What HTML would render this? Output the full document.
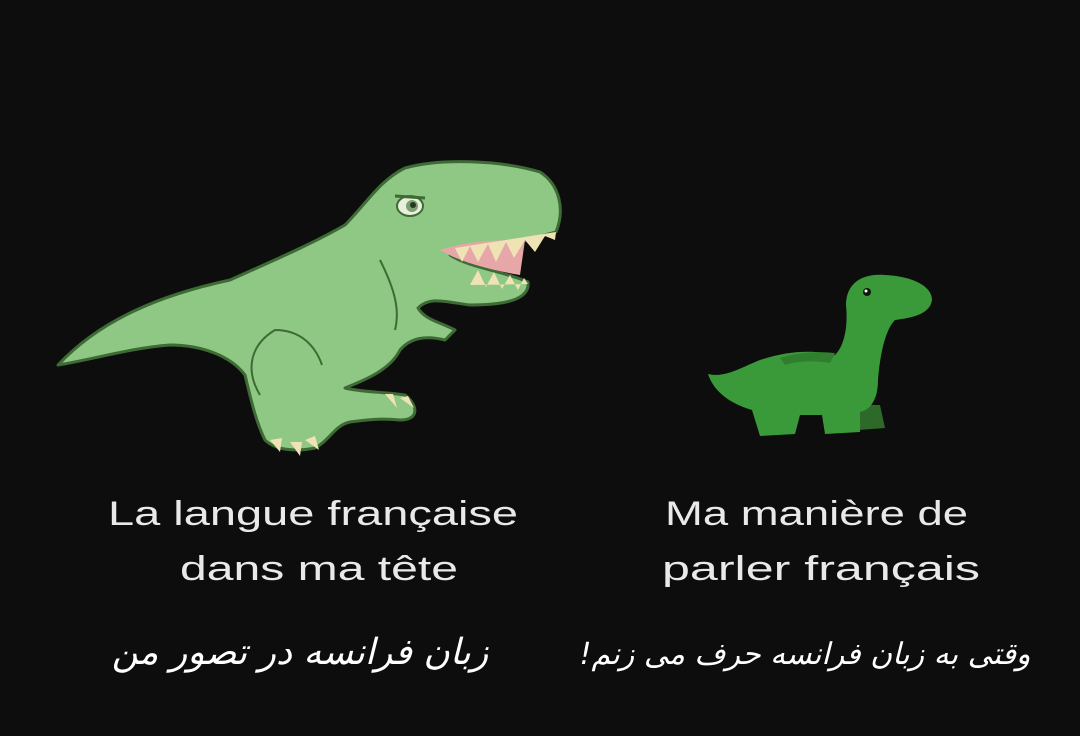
<!DOCTYPE html>
<html><head><meta charset="utf-8"><style>
html,body{margin:0;padding:0;background:#0d0d0d;}
svg{display:block}
.fa{position:absolute;color:#fff;font-family:"DejaVu Sans",sans-serif;font-style:italic;font-size:36px;line-height:50px;direction:rtl;text-align:center;white-space:nowrap;}
</style></head><body>
<div style="position:relative;width:1080px;height:736px;overflow:hidden">
<svg width="1080" height="736" viewBox="0 0 1080 736" xmlns="http://www.w3.org/2000/svg">
<rect width="1080" height="736" fill="#0d0d0d"/>
<g stroke="#3d6a35" stroke-width="3" stroke-linejoin="round">
<path d="M58,365 C100,320 160,295 230,280 C270,262 310,245 345,225 C365,205 380,180 405,168 C440,158 500,160 540,172 C560,185 565,210 556,232 L520,242 C495,248 470,250 450,255 C470,268 500,270 528,282 C530,298 510,305 470,305 C445,302 430,296 418,308 C425,320 440,322 455,330 L445,340 C425,335 410,338 400,350 C390,370 365,380 345,388 C360,392 385,392 405,395 C418,405 420,420 400,420 C380,418 365,420 350,422 C335,425 330,440 315,448 C295,452 275,450 265,440 C255,420 250,395 245,375 C230,355 200,345 170,345 C130,348 90,360 58,365 Z" fill="#8fc784"/>
<path d="M260,395 C245,370 250,345 275,330 C300,330 315,345 322,365" fill="none" stroke-width="2"/>
<path d="M380,260 C395,290 400,310 395,330" fill="none" stroke-width="2"/>
</g>
<path d="M440,250 C470,240 500,240 525,240 L520,275 C490,270 460,262 440,250Z" fill="#e7a7a8"/>
<path d="M455,248 L462,262 L470,246 L478,262 L488,244 L496,262 L506,242 L514,258 L525,240 L535,252 L545,236 L555,240 L556,232Z" fill="#efe3b5"/>
<path d="M470,285 L478,270 L486,287 L494,272 L502,289 L510,275 L518,290 L524,278 L528,284Z" fill="#efe3b5"/>
<path d="M385,394 l12,14 l-4,-14z M400,398 l14,10 l-6,-12z M270,440 l10,12 l2,-14z M290,442 l10,14 l2,-14z M305,440 l14,10 l-4,-14z" fill="#efe3b5"/>
<ellipse cx="410" cy="206" rx="13" ry="10" fill="#e8f0dc" stroke="#3d6a35" stroke-width="2"/>
<circle cx="412" cy="206" r="6" fill="#7aa06e"/><circle cx="413" cy="205" r="3" fill="#243a20"/>
<path d="M395,196 L425,198" stroke="#3d6a35" stroke-width="3"/>
<path d="M856,405 L880,405 L885,428 L858,430Z" fill="#2d6a2a"/>
<path d="M708,374 C725,378 740,368 760,360 C790,350 815,350 835,355 C845,345 848,325 846,305 C846,285 860,273 885,275 C910,276 932,285 932,300 C930,315 910,318 895,320 C885,330 880,355 878,380 C878,400 870,410 860,412 L860,432 L825,434 L822,415 L800,415 L795,434 L760,436 L752,410 C735,405 715,395 708,374Z" fill="#3a9a3a"/>
<path d="M780,358 q25,-8 55,-5 l-5,10 q-25,-4 -45,2z" fill="#2f7f2f"/>
<circle cx="867" cy="292" r="4" fill="#0a1a0a"/><circle cx="866" cy="291" r="1.5" fill="#fff"/>
<g fill="#e9e9e9" font-family="'Liberation Sans',sans-serif" font-size="34">
<text x="108" y="525" textLength="410" lengthAdjust="spacingAndGlyphs">La langue française</text>
<text x="180" y="580" textLength="278" lengthAdjust="spacingAndGlyphs">dans ma tête</text>
<text x="665" y="525" textLength="303" lengthAdjust="spacingAndGlyphs">Ma manière de</text>
<text x="662" y="580" textLength="318" lengthAdjust="spacingAndGlyphs">parler français</text>
</g>
</svg>
<div class="fa" style="left:100px;top:628px;width:400px;">زبان فرانسه در تصور من</div>
<div class="fa" style="left:575px;top:630px;width:460px;font-size:30px;">وقتی به زبان فرانسه حرف می زنم!</div>
</div>
</body></html>
